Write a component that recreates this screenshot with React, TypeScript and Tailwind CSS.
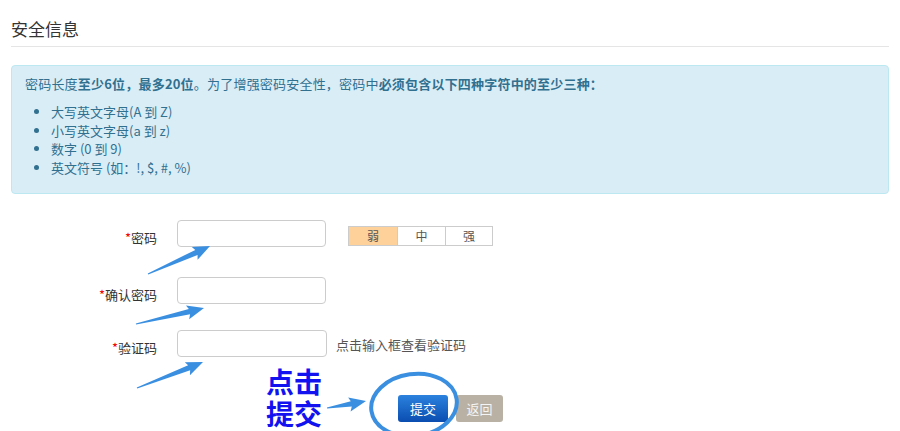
import React from 'react';

interface ArrowProps {
    x1: number;
    y1: number;
    x2: number;
    y2: number;
}

// tapered hand-drawn style arrow, thin tail -> wide head
function Arrow({ x1, y1, x2, y2 }: ArrowProps) {
    const dx = x2 - x1;
    const dy = y2 - y1;
    const len = Math.hypot(dx, dy);
    const ux = dx / len;
    const uy = dy / len;
    const nx = -uy;
    const ny = ux;
    const headLen = 15;
    const bx = x2 - ux * headLen;
    const by = y2 - uy * headLen;
    const pts = [
        [x1 + nx * 0.6, y1 + ny * 0.6],
        [bx + nx * 3, by + ny * 3],
        [bx - ux * 2 + nx * 7.5, by - uy * 2 + ny * 7.5],
        [x2, y2],
        [bx - ux * 2 - nx * 6.5, by - uy * 2 - ny * 6.5],
        [bx - nx * 2.5, by - ny * 2.5],
        [x1 - nx * 0.6, y1 - ny * 0.6],
    ];
    return <polygon points={pts.map((p) => p.join(',')).join(' ')} fill="#3a8fe0" />;
}

export default function App() {
    return (
        <div className="relative w-[900px] h-[431px] overflow-hidden bg-white px-[11px] font-['Noto_Sans_CJK_SC','Liberation_Sans',sans-serif] text-[#333]">
            <h3 className="pt-[19px] pb-[7px] text-[17px] leading-[20px] font-normal border-b border-[#e5e5e5]">
                安全信息
            </h3>

            <div className="mt-[18px] rounded-[4px] border border-[#bce8f1] bg-[#d9edf7] text-[#31708f] text-[13px] pt-[9px] pb-[15px] px-[13px]">
                <p className="leading-[18px] tracking-[0.2px]">
                    密码长度<strong className="font-bold">至少6位，最多20位</strong>。为了增强密码安全性，密码中
                    <strong className="font-bold">必须包含以下四种字符中的至少三种：</strong>
                </p>
                <ul className="mt-[10px] list-disc pl-[26px] leading-[18.7px]">
                    <li>大写英文字母(A 到 Z)</li>
                    <li>小写英文字母(a 到 z)</li>
                    <li>数字 (0 到 9)</li>
                    <li>英文符号 (如：!, $, #, %)</li>
                </ul>
            </div>

            <form className="mt-[26px] text-[13px]">
                <div className="flex items-start">
                    <label className="w-[146px] text-right pt-[9px] leading-[18px]">
                        <span className="text-[#e00]">*</span>密码
                    </label>
                    <input
                        type="password"
                        className="ml-[20px] w-[149px] h-[27px] rounded-[4px] border border-[#ccc] px-2 outline-none"
                    />
                    <div className="ml-[22px] mt-[6px] flex h-[20px] border border-[#ccc] text-[12px] text-[#555]">
                        <div className="w-[48px] flex items-center justify-center bg-[#fed19b]">弱</div>
                        <div className="w-[48px] flex items-center justify-center border-l border-[#ccc] bg-white">中</div>
                        <div className="w-[47px] flex items-center justify-center border-l border-[#ccc] bg-white">强</div>
                    </div>
                </div>

                <div className="mt-[30px] flex items-start">
                    <label className="w-[146px] text-right pt-[9px] leading-[18px]">
                        <span className="text-[#e00]">*</span>确认密码
                    </label>
                    <input
                        type="password"
                        className="ml-[20px] w-[149px] h-[27px] rounded-[4px] border border-[#ccc] px-2 outline-none"
                    />
                </div>

                <div className="mt-[26px] flex items-start">
                    <label className="w-[146px] text-right pt-[9px] leading-[18px]">
                        <span className="text-[#e00]">*</span>验证码
                    </label>
                    <input
                        type="text"
                        className="ml-[20px] w-[150px] h-[27px] rounded-[4px] border border-[#ccc] px-2 outline-none"
                    />
                    <span className="ml-[9px] pt-[6px] leading-[18px] text-[#555]">点击输入框查看验证码</span>
                </div>

                <div className="mt-[38px] ml-[387px] flex gap-[8px]">
                    <button
                        type="button"
                        className="w-[50px] h-[27px] rounded-[3px] bg-gradient-to-b from-[#2c82de] to-[#0a4db0] text-white text-[13px]"
                    >
                        提交
                    </button>
                    <button
                        type="button"
                        className="w-[47px] h-[27px] rounded-[3px] bg-[#b9b1a4] text-[#f4f4f4] text-[13px]"
                    >
                        返回
                    </button>
                </div>
            </form>

            {/* annotation overlay */}
            <svg className="pointer-events-none absolute left-0 top-0" width="900" height="431">
                <Arrow x1={148} y1={274} x2={210} y2={246} />
                <Arrow x1={136} y1={324} x2={204} y2={308} />
                <Arrow x1={137} y1={388} x2={203} y2={362} />
                <Arrow x1={327} y1={408} x2={366} y2={401} />
                <ellipse
                    cx={414}
                    cy={405}
                    rx={43}
                    ry={31}
                    transform="rotate(-8 414 405)"
                    fill="none"
                    stroke="#3a8fe0"
                    strokeWidth={4}
                />
            </svg>
            <div className="pointer-events-none absolute left-[266px] top-[365px] text-[28px] leading-[32px] font-semibold text-[#1212f0]">
                <div>点击</div>
                <div>提交</div>
            </div>
        </div>
    );
}
